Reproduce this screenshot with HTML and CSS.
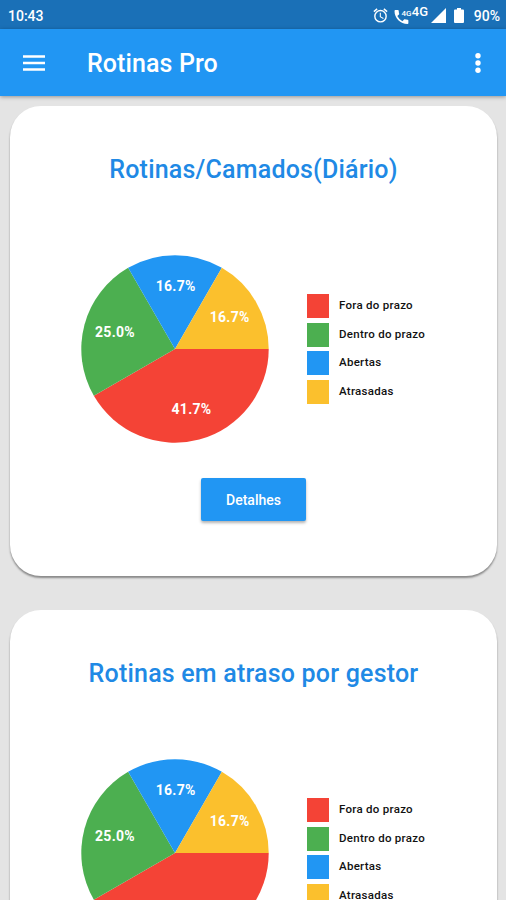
FILE: index.html
```html
<!DOCTYPE html>
<html lang="pt-BR">
<head>
  <meta charset="UTF-8">
  <meta name="viewport" content="width=device-width, initial-scale=1.0">
  <title>Rotinas Pro</title>
  <link rel="stylesheet" href="styles.css">
</head>
<body>
  <div class="status-bar">
    <span class="clock">10:43</span>
    <div class="status-icons">
      <svg class="icon-alarm" width="17" height="17" viewBox="0 0 24 24" fill="#fff">
        <path d="M22 5.72l-4.6-3.86-1.29 1.53 4.6 3.86L22 5.72zM7.88 3.39L6.6 1.86 2 5.71l1.29 1.53 4.59-3.85zM12.5 8H11v6l4.75 2.85.75-1.23-4-2.37V8zM12 4a9 9 0 1 0 0 18 9 9 0 0 0 0-18zm0 16a7 7 0 1 1 0-14 7 7 0 0 1 0 14z"/>
      </svg>
      <svg class="icon-call" width="19" height="18" viewBox="0 0 19 18">
        <path transform="translate(-1.8 .8) scale(.77)" fill="#fff" d="M20 15.5c-1.25 0-2.45-.2-3.57-.57-.35-.11-.74-.03-1.02.24l-2.2 2.2a15.1 15.1 0 0 1-6.59-6.59l2.2-2.21c.28-.26.36-.65.25-1C8.7 6.45 8.5 5.25 8.5 4c0-.55-.45-1-1-1H4c-.55 0-1 .45-1 1 0 9.39 7.61 17 17 17 .55 0 1-.45 1-1v-3.5c0-.55-.45-1-1-1z"/>
        <text class="call-label" x="7.5" y="8.5">4G</text>
      </svg>
      <span class="network">4G</span>
      <svg class="icon-signal" width="15" height="15" viewBox="0 0 15 15"><path d="M15 0v15H0z" fill="#fff"/></svg>
      <svg class="icon-battery" width="10" height="15" viewBox="0 0 10 15"><path d="M3 0h4v1.5h2q1 0 1 1V14q0 1-1 1H1q-1 0-1-1V2.500q0-1 1-1h2z" fill="#fff"/></svg>
      <span class="battery">90%</span>
    </div>
  </div>

  <header class="app-bar">
    <svg class="icon-menu" width="22" height="16" viewBox="0 0 22 16"><path d="M0 1.500h22M0 8h22M0 14.500h22" stroke="#fff" stroke-width="2.500"/></svg>
    <h1>Rotinas Pro</h1>
    <svg class="icon-more" width="6" height="20" viewBox="0 0 6 20" fill="#fff">
      <circle cx="3" cy="2.800" r="2.700"/>
      <circle cx="3" cy="10" r="2.700"/>
      <circle cx="3" cy="17.200" r="2.700"/>
    </svg>
  </header>

  <main>
    <section class="card">
      <h2>Rotinas/Camados(Diário)</h2>
      <div class="chart">
        <svg class="pie" width="188" height="188" viewBox="-94 -94 188 188">
          <path fill="#f44336" d="M0 0H93.700A93.700 93.700 0 0 1 -81.150 46.850Z"/>
          <path fill="#4caf50" d="M0 0L-81.150 46.850A93.700 93.700 0 0 1 -46.850 -81.150Z"/>
          <path fill="#2196f3" d="M0 0L-46.850 -81.150A93.700 93.700 0 0 1 46.850 -81.150Z"/>
          <path fill="#fbc02d" d="M0 0L46.850 -81.150A93.700 93.700 0 0 1 93.700 0Z"/>
          <text x="16.500" y="65">41.7%</text>
          <text x="-60" y="-12">25.0%</text>
          <text x="0.700" y="-58">16.7%</text>
          <text x="54.700" y="-27">16.7%</text>
        </svg>
        <ul class="legend">
          <li><span class="swatch red"></span><span class="label">Fora do prazo</span></li>
          <li><span class="swatch green"></span><span class="label">Dentro do prazo</span></li>
          <li><span class="swatch blue"></span><span class="label">Abertas</span></li>
          <li><span class="swatch yellow"></span><span class="label">Atrasadas</span></li>
        </ul>
      </div>
      <button type="button">Detalhes</button>
    </section>

    <section class="card">
      <h2>Rotinas em atraso por gestor</h2>
      <div class="chart">
        <svg class="pie" width="188" height="188" viewBox="-94 -94 188 188">
          <path fill="#f44336" d="M0 0H93.700A93.700 93.700 0 0 1 -81.150 46.850Z"/>
          <path fill="#4caf50" d="M0 0L-81.150 46.850A93.700 93.700 0 0 1 -46.850 -81.150Z"/>
          <path fill="#2196f3" d="M0 0L-46.850 -81.150A93.700 93.700 0 0 1 46.850 -81.150Z"/>
          <path fill="#fbc02d" d="M0 0L46.850 -81.150A93.700 93.700 0 0 1 93.700 0Z"/>
          <text x="-60" y="-12">25.0%</text>
          <text x="0.700" y="-58">16.7%</text>
          <text x="54.700" y="-27">16.7%</text>
        </svg>
        <ul class="legend">
          <li><span class="swatch red"></span><span class="label">Fora do prazo</span></li>
          <li><span class="swatch green"></span><span class="label">Dentro do prazo</span></li>
          <li><span class="swatch blue"></span><span class="label">Abertas</span></li>
          <li><span class="swatch yellow"></span><span class="label">Atrasadas</span></li>
        </ul>
      </div>
    </section>
  </main>
</body>
</html>
```
FILE: styles.css
```css
* {
  box-sizing: border-box;
}
body {
  font-family: Roboto, "Liberation Sans", sans-serif;
  margin: 0;
  height: 900px;
  overflow: hidden;
  background: #e4e4e4;
  color: #111;
}

/* Status bar */
.status-bar {
  display: flex;
  align-items: center;
  justify-content: space-between;
  height: 29px;
  padding: 2px 6px 0 8px;
  background: #1a70b7;
  color: #fff;
  font-size: 14px;
  font-weight: 500;
}
.status-icons {
  display: flex;
  align-items: center;
}
.icon-call {
  margin-left: 5px;
}
.call-label {
  font-size: 8px;
  font-weight: 500;
  fill: #fff;
}
.network {
  width: 18px;
  margin: 0 0 7px -1px;
  font-size: 13px;
  line-height: 14px;
}
.icon-signal {
  margin-left: 1px;
}
.icon-battery {
  margin-left: 8px;
}
.battery {
  margin-left: 10px;
}

/* App bar */
.app-bar {
  position: relative;
  display: flex;
  align-items: center;
  height: 67px;
  padding: 0 25px 0 23px;
  background: #2196f3;
  box-shadow: 0 1px 4px rgba(0, 0, 0, 0.35);
}
.app-bar h1 {
  flex-grow: 1;
  margin: 2px 0 0 42px;
  color: #fff;
  font-size: 25px;
  font-weight: 500;
  letter-spacing: 0.1px;
}

/* Cards */
main {
  display: flex;
  flex-direction: column;
  gap: 34px;
  padding: 10px 9px 0 10px;
}
.card {
  display: flex;
  flex-direction: column;
  align-items: center;
  flex-shrink: 0;
  height: 470px;
  padding-top: 47px;
  background: #fff;
  border-radius: 31px;
  box-shadow: 0 2px 2px rgba(0, 0, 0, 0.4);
}
.card h2 {
  margin: 0;
  color: #2089e5;
  font-size: 25px;
  font-weight: 500;
  letter-spacing: 0.2px;
  line-height: 34px;
  white-space: nowrap;
}
.chart {
  display: flex;
  align-items: center;
  width: 100%;
  margin-top: 68px;
  padding-left: 71px;
}
.pie text {
  fill: #fff;
  font-size: 14px;
  font-weight: 700;
  letter-spacing: 0.3px;
  text-anchor: middle;
}
.legend {
  display: flex;
  flex-direction: column;
  gap: 4.7px;
  margin: 0 0 0 38px;
  padding: 0;
  list-style: none;
}
.legend li {
  display: flex;
  align-items: center;
  gap: 10px;
  height: 24px;
  font-size: 11.5px;
  font-weight: 500;
}
.label {
  padding-bottom: 2px;
  letter-spacing: 0.28px;
}
.swatch {
  width: 22px;
  height: 24px;
}
.red {
  background: #f44336;
}
.green {
  background: #4caf50;
}
.blue {
  background: #2196f3;
}
.yellow {
  background: #fbc02d;
}
.card button {
  width: 105px;
  height: 43px;
  margin-top: 35px;
  border: 0;
  border-radius: 2px;
  background: #2196f3;
  box-shadow: 0 2px 3px rgba(0, 0, 0, 0.3);
  color: #fff;
  font: 500 14px Roboto, "Liberation Sans", sans-serif;
}
```
